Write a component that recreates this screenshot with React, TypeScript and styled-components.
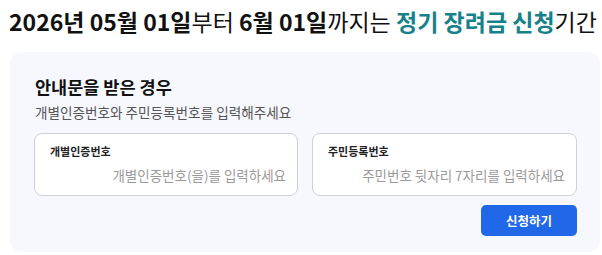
import React from 'react';
import styled, { createGlobalStyle } from 'styled-components';

const GlobalStyle = createGlobalStyle`
  * { box-sizing: border-box; }
  body {
    margin: 0;
    background: #ffffff;
    font-family: "Noto Sans CJK KR", "Noto Sans", sans-serif;
    color: #111111;
  }
`;

const Page = styled.div`
  width: 602px;
  padding: 5px 0 0 9px;
`;

const Title = styled.h1`
  margin: 0;
  font-size: 23px;
  line-height: 33px;
  font-weight: 700;
  white-space: nowrap;
  color: #111111;
`;

const Light = styled.span`
  font-weight: 400;
`;

const Accent = styled.span`
  color: #17818a;
`;

const Card = styled.section`
  margin: 14px 0 0 1px;
  width: 590px;
  height: 200px;
  padding: 22px 23px 0 24px;
  background: #f7f8fd;
  border-radius: 12px;
  display: flex;
  flex-direction: column;
`;

const CardTitle = styled.h2`
  margin: 0 0 0 1px;
  font-size: 17.5px;
  line-height: 26px;
  font-weight: 700;
  color: #111111;
`;

const CardDesc = styled.p`
  margin: 2px 0 0 1px;
  font-size: 13.6px;
  line-height: 20px;
  color: #555555;
`;

const Fields = styled.div`
  margin-top: 11px;
  display: grid;
  grid-template-columns: 264px 265px;
  gap: 14px;
`;

const Field = styled.label`
  height: 63px;
  background: #ffffff;
  border: 1px solid #cfd1d6;
  border-radius: 8px;
  padding: 9px 11px 0 15px;
  display: flex;
  flex-direction: column;
`;

const FieldLabel = styled.span`
  font-size: 11px;
  line-height: 16px;
  font-weight: 700;
  color: #222222;
`;

const Input = styled.input`
  margin-top: 6px;
  border: none;
  outline: none;
  background: transparent;
  padding: 0;
  width: 100%;
  text-align: right;
  font-family: inherit;
  font-size: 13.5px;
  line-height: 20px;
  color: #222222;
  &::placeholder {
    color: #9a9a9a;
  }
`;

const Actions = styled.div`
  margin-top: 9px;
  display: flex;
  justify-content: flex-end;
`;

const Submit = styled.button`
  width: 96px;
  height: 31px;
  border: none;
  border-radius: 5px;
  background: #2168e8;
  color: #ffffff;
  font-family: inherit;
  font-size: 12.5px;
  font-weight: 700;
  cursor: pointer;
`;

export default function App() {
  return (
    <>
      <GlobalStyle />
      <Page>
        <Title>
          2026년 05월 01일<Light>부터</Light> 6월 01일<Light>까지는</Light>{' '}
          <Accent>정기 장려금 신청</Accent>
          <Light>기간</Light>
        </Title>
        <Card>
          <CardTitle>안내문을 받은 경우</CardTitle>
          <CardDesc>개별인증번호와 주민등록번호를 입력해주세요</CardDesc>
          <Fields>
            <Field>
              <FieldLabel>개별인증번호</FieldLabel>
              <Input placeholder="개별인증번호(을)를 입력하세요" />
            </Field>
            <Field>
              <FieldLabel>주민등록번호</FieldLabel>
              <Input placeholder="주민번호 뒷자리 7자리를 입력하세요" />
            </Field>
          </Fields>
          <Actions>
            <Submit type="button">신청하기</Submit>
          </Actions>
        </Card>
      </Page>
    </>
  );
}
